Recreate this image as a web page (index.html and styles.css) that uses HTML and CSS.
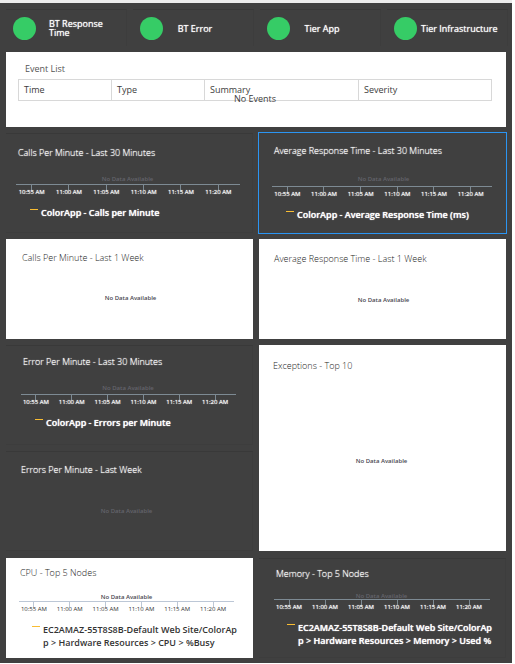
FILE: index.html
```html
<!DOCTYPE html>
<html lang="en">
<head>
<meta charset="utf-8">
<title>ColorApp Dashboard</title>
<link rel="stylesheet" href="styles.css">
</head>
<body>
<main class="dashboard">
  <ul class="health">
    <li class="status status-long"><span class="dot"></span><span class="status-name">BT Response Time</span></li>
    <li class="status"><span class="dot"></span><span class="status-name">BT Error</span></li>
    <li class="status"><span class="dot"></span><span class="status-name">Tier App</span></li>
    <li class="status status-wide"><span class="dot"></span><span class="status-name">Tier Infrastructure</span></li>
  </ul>

  <section class="events">
    <h2 class="events-title">Event List</h2>
    <table class="event-table">
      <colgroup><col class="col-time"><col class="col-type"><col class="col-summary"><col class="col-severity"></colgroup>
      <thead><tr><th>Time</th><th>Type</th><th>Summary</th><th>Severity</th></tr></thead>
    </table>
    <p class="no-events">No Events</p>
  </section>

  <div class="columns">
    <div class="column">
      <section class="card dark calls">
        <h2 class="title">Calls Per Minute - Last 30 Minutes</h2>
        <p class="no-data">No Data Available</p>
        <div class="axis"><ol class="ticks"><li>10:55 AM</li><li>11:00 AM</li><li>11:05 AM</li><li>11:10 AM</li><li>11:15 AM</li><li>11:20 AM</li></ol></div>
        <p class="legend">ColorApp - Calls per Minute</p>
      </section>
      <section class="card light calls-week">
        <h2 class="title">Calls Per Minute - Last 1 Week</h2>
        <p class="no-data">No Data Available</p>
      </section>
      <section class="card dark errors">
        <h2 class="title">Error Per Minute - Last 30 Minutes</h2>
        <p class="no-data">No Data Available</p>
        <div class="axis"><ol class="ticks"><li>10:55 AM</li><li>11:00 AM</li><li>11:05 AM</li><li>11:10 AM</li><li>11:15 AM</li><li>11:20 AM</li></ol></div>
        <p class="legend">ColorApp - Errors per Minute</p>
      </section>
      <section class="card dark errors-week">
        <h2 class="title">Errors Per Minute - Last Week</h2>
        <p class="no-data">No Data Available</p>
      </section>
    </div>
    <div class="column">
      <section class="card dark selected response">
        <h2 class="title">Average Response Time - Last 30 Minutes</h2>
        <p class="no-data">No Data Available</p>
        <div class="axis"><ol class="ticks"><li>10:55 AM</li><li>11:00 AM</li><li>11:05 AM</li><li>11:10 AM</li><li>11:15 AM</li><li>11:20 AM</li></ol></div>
        <p class="legend">ColorApp - Average Response Time (ms)</p>
      </section>
      <section class="card light response-week">
        <h2 class="title">Average Response Time - Last 1 Week</h2>
        <p class="no-data">No Data Available</p>
      </section>
      <section class="card light exceptions">
        <h2 class="title">Exceptions - Top 10</h2>
        <p class="no-data">No Data Available</p>
      </section>
    </div>
  </div>

  <div class="columns nodes">
    <section class="card light cpu">
      <h2 class="title">CPU - Top 5 Nodes</h2>
      <p class="no-data">No Data Available</p>
      <div class="axis"><ol class="ticks"><li>10:55 AM</li><li>11:00 AM</li><li>11:05 AM</li><li>11:10 AM</li><li>11:15 AM</li><li>11:20 AM</li></ol></div>
      <p class="legend legend-long">EC2AMAZ-55T8S8B-Default Web Site/ColorApp &gt; Hardware Resources &gt; CPU &gt; %Busy</p>
    </section>
    <section class="card dark memory">
      <h2 class="title">Memory - Top 5 Nodes</h2>
      <p class="no-data">No Data Available</p>
      <div class="axis"><ol class="ticks"><li>10:55 AM</li><li>11:00 AM</li><li>11:05 AM</li><li>11:10 AM</li><li>11:15 AM</li><li>11:20 AM</li></ol></div>
      <p class="legend legend-long">EC2AMAZ-55T8S8B-Default Web Site/ColorApp &gt; Hardware Resources &gt; Memory &gt; Used %</p>
    </section>
  </div>
</main>
</body>
</html>
```
FILE: styles.css
```css
* { box-sizing: border-box; }

body {
  margin: 0;
  padding-right: 3px;
  background: #fff;
  font-family: "Open Sans", "Noto Sans", sans-serif;
  font-size: 9px;
  line-height: 12px;
}

h2, p, ul, ol { margin: 0; padding: 0; font-size: inherit; font-weight: 400; }
ul, ol { list-style: none; }

.dashboard {
  display: flex;
  flex-direction: column;
  gap: 6px;
  padding: 6px 6px 5px;
  border-top: 3px solid #ececec;
  background: #404040;
}

/* Health indicators */
.health {
  display: grid;
  grid-template-columns: repeat(4, 1fr);
  gap: 6px;
  margin-right: -2px;
}
.status {
  display: flex;
  align-items: center;
  height: 37px;
  padding-left: 7px;
  border-top: 1px solid #393939;
  border-right: 1px solid #3d3d3d;
  color: #fff;
  text-shadow: 0 0 1px #fff;
  line-height: 9px;
}
.dot {
  flex: none;
  width: 23px;
  height: 23px;
  border-radius: 50%;
  background: #36cc66;
}
.status-name { width: 64px; text-align: center; }
.status-long .status-name { margin-left: 13px; text-align: left; }
.status-wide .status-name { width: auto; margin-left: 4px; white-space: nowrap; }

/* Event list */
.events {
  height: 75px;
  padding: 11px 14px 0 12px;
  background: #fff;
  color: #3c3c3c;
}
.events-title { padding-left: 7px; margin-bottom: 4px; color: #555; }
.event-table {
  width: 100%;
  table-layout: fixed;
  border-collapse: collapse;
}
.event-table th {
  height: 21px;
  padding: 0 5px;
  border: 1px solid #d8d8d8;
  text-align: left;
  font-weight: 400;
}
.col-time, .col-type { width: 93px; }
.col-summary { width: 154px; }
.no-events { margin-top: -8px; text-align: center; position: relative; }

/* Cards */
.columns {
  display: grid;
  grid-template-columns: 1fr 1fr;
  gap: 6px;
}
.column { display: flex; flex-direction: column; gap: 6px; }
.card { min-width: 0; height: 100px; }
.dark {
  color: #fff;
  box-shadow: inset 0 1px #393939, inset -1px 0 #3d3d3d, inset 0 -1px #3d3d3d;
}
.light { background: #fff; color: #333; }
.selected { box-shadow: 0 0 0 1px #2b95f3; }
.exceptions { flex: 1; }
.nodes { margin-top: 1px; }

.title { font-weight: 300; }
.light .title { color: #1c1c1c; }
.dark .title,
.dark .ticks,
.dark .legend { text-shadow: 0 0 1px #fff; }

.no-data {
  text-align: center;
  font-size: 6px;
  line-height: 8px;
  font-weight: 600;
  color: #484850;
}
.dark .no-data { color: #64646c; }

.axis { border-top: 1px solid #7d8a93; }
.light .axis { border-color: #bcc7d6; }
.ticks {
  display: grid;
  grid-template-columns: repeat(6, 1fr);
  margin: 0 3px 0 -3px;
  font-size: 6px;
  line-height: 8px;
  text-align: center;
  white-space: nowrap;
}
.ticks li {
  padding-top: 3px;
  background: linear-gradient(#7d8a93, #7d8a93) center top / 1px 5px no-repeat;
}
.light .ticks li { background-image: linear-gradient(#bcc7d6, #bcc7d6); }

.legend {
  display: flex;
  margin-top: 10px;
  font-weight: 600;
  line-height: 13px;
}
.legend::before {
  content: "";
  flex: none;
  width: 8px;
  height: 1px;
  margin: 3px 3px 0 0;
  background: #f9bd33;
}
.legend-long { word-break: break-all; }

.calls { padding: 14px 0 0 12px; }
.calls .no-data { margin: 16px 16px 1px 0; }
.calls .axis { margin: 0 13px 0 -2px; }
.calls .legend { padding-left: 12px; }

.response { padding: 12px 0 0 15px; }
.response .no-data { margin: 18px 13px 3px 0; }
.response .axis { margin: 0 14px 0 -2px; }
.response .legend { padding-left: 12px; }

.errors { padding: 11px 0 0 17px; }
.errors .no-data { margin: 16px 20px 2px 0; }
.errors .axis { margin: 0 17px 0 -2px; }
.errors .legend { padding-left: 12px; }

.cpu { padding: 9px 0 0 14px; }
.cpu .no-data { margin: 14px 20px 0 0; }
.cpu .axis { margin: 0 19px 0 -1px; }
.cpu .legend { padding: 0 14px 0 12px; }

.memory { padding: 10px 0 0 17px; }
.memory .no-data { margin: 12px 19px -1px 0; }
.memory .axis { margin: 0 16px 0 -2px; }
.memory .legend { padding: 0 10px 0 11px; }

.calls-week { padding: 13px 0 0 16px; }
.calls-week .no-data { margin: 30px 14px 0 0; }
.response-week { padding: 14px 0 0 15px; }
.response-week .no-data { margin: 31px 13px 0 0; }
.exceptions { padding: 15px 0 0 14px; }
.exceptions .no-data { margin: 85px 16px 0 0; }
.errors-week { padding: 13px 0 0 15px; }
.errors-week .no-data { margin: 31px 21px 0 0; }
```
